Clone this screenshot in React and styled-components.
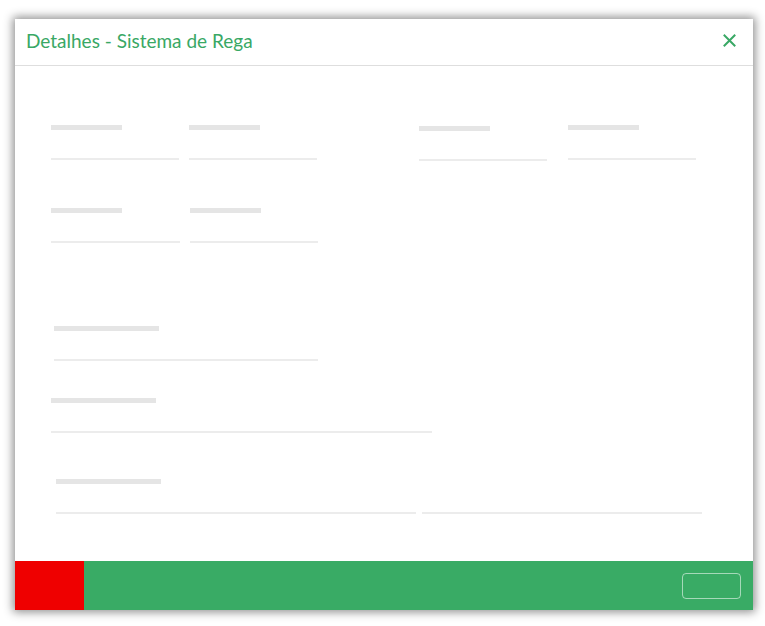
import React from 'react';
import styled, { createGlobalStyle } from 'styled-components';

const GlobalStyle = createGlobalStyle`
body {
  margin: 0;
  background: #fff;
  font-family: Lato, "Liberation Sans", sans-serif;
}
`

const Page = styled.div`
width: 765px;
height: 626px;
padding: 19px 0 0 15px;
box-sizing: border-box;
`
const Modal = styled.div`
width: 738px;
height: 591px;
background: #fff;
display: flex;
flex-direction: column;
box-shadow: 0 0 9px 2px rgba(0, 0, 0, 0.45);
`
const Header = styled.div`
height: 47px;
display: flex;
align-items: center;
justify-content: space-between;
padding: 0 17px 3px 11px;
box-sizing: border-box;
border-bottom: 1px solid #dedede;
`
const Title = styled.h4`
margin: 0;
font-weight: 400;
font-size: 19px;
color: #39a865;
`
const Close = styled.button`
border: none;
background: none;
padding: 0;
width: 13px;
height: 13px;
display: flex;
cursor: pointer;
`
const Body = styled.div`
flex: 1;
padding: 59px 0 0 36px;
`
const Row = styled.div`
display: flex;
margin-top: ${p => p.$top || 0}px;
`
const Field = styled.div`
display: flex;
flex-direction: column;
margin-left: ${p => p.$left || 0}px;
padding-top: ${p => p.$shift || 0}px;
`
const LabelBar = styled.div`
width: ${p => p.$w || 71}px;
height: 5px;
background: #e5e5e5;
margin-bottom: 28px;
`
const Lines = styled.div`
display: flex;
gap: 6px;
`
const Line = styled.div`
width: ${p => p.$w || 128}px;
height: 2px;
background: #ececec;
`
const Footer = styled.div`
height: 49px;
display: flex;
align-items: center;
background: #39ab65;
`
const Cancel = styled.div`
width: 69px;
height: 100%;
background: #ef0000;
`
const SaveButton = styled.button`
margin-left: auto;
margin-right: 12px;
width: 59px;
height: 26px;
background: transparent;
border: 1px solid rgba(255, 255, 255, 0.55);
border-radius: 4px;
`

const Skeleton = ({ left, shift, label, line }) => (
    <Field $left={left} $shift={shift}>
        <LabelBar $w={label} />
        <Line $w={line} />
    </Field>
);

const App = () => {
    return (
        <Page>
            <GlobalStyle />
            <Modal>
                <Header>
                    <Title>Detalhes - Sistema de Rega</Title>
                    <Close aria-label="Fechar">
                        <svg width="13" height="13" viewBox="0 0 13 13">
                            <path d="M1.5 1.5 L11.5 11.5 M11.5 1.5 L1.5 11.5" stroke="#39a865" strokeWidth="2" strokeLinecap="square" />
                        </svg>
                    </Close>
                </Header>
                <Body>
                    <Row>
                        <Skeleton />
                        <Skeleton left={10} />
                        <Skeleton left={102} shift={1} />
                        <Skeleton left={21} />
                    </Row>
                    <Row $top={47}>
                        <Skeleton left={0} line={129} />
                        <Skeleton left={10} />
                    </Row>
                    <Row $top={83}>
                        <Skeleton left={3} label={105} line={264} />
                    </Row>
                    <Row $top={37}>
                        <Skeleton label={105} line={381} />
                    </Row>
                    <Row $top={46}>
                        <Field $left={5}>
                            <LabelBar $w={105} />
                            <Lines>
                                <Line $w={360} />
                                <Line $w={280} />
                            </Lines>
                        </Field>
                    </Row>
                </Body>
                <Footer>
                    <Cancel />
                    <SaveButton aria-label="Guardar" />
                </Footer>
            </Modal>
        </Page>
    );
};

export default App;
